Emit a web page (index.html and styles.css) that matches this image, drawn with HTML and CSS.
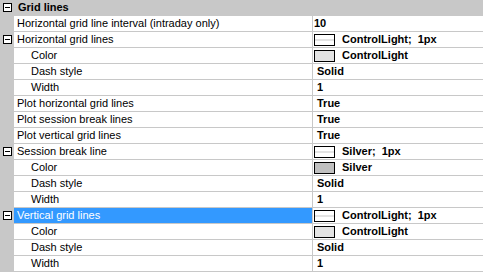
FILE: index.html
```html
<!DOCTYPE html>
<html lang="en">
<head>
    <meta charset="UTF-8">
    <meta name="viewport" content="width=device-width, initial-scale=1.0">
    <title>Grid lines</title>
    <link rel="stylesheet" href="styles.css">
</head>
<body>
    <div class="grid">
        <div class="category">
            <div class="gutter"><span class="toggle"></span></div>
            <div class="category-name">Grid lines</div>
        </div>

        <div class="row">
            <div class="gutter"></div>
            <div class="name">Horizontal grid line interval (intraday only)</div>
            <div class="value">10</div>
        </div>
        <div class="row">
            <div class="gutter"><span class="toggle"></span></div>
            <div class="name">Horizontal grid lines</div>
            <div class="value"><span class="swatch line-swatch"></span>ControlLight;&nbsp; 1px</div>
        </div>
        <div class="row">
            <div class="gutter"></div>
            <div class="name sub">Color</div>
            <div class="value"><span class="swatch control-light"></span>ControlLight</div>
        </div>
        <div class="row">
            <div class="gutter"></div>
            <div class="name sub">Dash style</div>
            <div class="value text">Solid</div>
        </div>
        <div class="row">
            <div class="gutter"></div>
            <div class="name sub">Width</div>
            <div class="value text">1</div>
        </div>
        <div class="row">
            <div class="gutter"></div>
            <div class="name">Plot horizontal grid lines</div>
            <div class="value text">True</div>
        </div>
        <div class="row">
            <div class="gutter"></div>
            <div class="name">Plot session break lines</div>
            <div class="value text">True</div>
        </div>
        <div class="row">
            <div class="gutter"></div>
            <div class="name">Plot vertical grid lines</div>
            <div class="value text">True</div>
        </div>
        <div class="row">
            <div class="gutter"><span class="toggle"></span></div>
            <div class="name">Session break line</div>
            <div class="value"><span class="swatch line-swatch"></span>Silver;&nbsp; 1px</div>
        </div>
        <div class="row">
            <div class="gutter"></div>
            <div class="name sub">Color</div>
            <div class="value"><span class="swatch silver"></span>Silver</div>
        </div>
        <div class="row">
            <div class="gutter"></div>
            <div class="name sub">Dash style</div>
            <div class="value text">Solid</div>
        </div>
        <div class="row">
            <div class="gutter"></div>
            <div class="name sub">Width</div>
            <div class="value text">1</div>
        </div>
        <div class="row selected">
            <div class="gutter"><span class="toggle"></span></div>
            <div class="name">Vertical grid lines</div>
            <div class="value"><span class="swatch line-swatch"></span>ControlLight;&nbsp; 1px</div>
        </div>
        <div class="row">
            <div class="gutter"></div>
            <div class="name sub">Color</div>
            <div class="value"><span class="swatch control-light"></span>ControlLight</div>
        </div>
        <div class="row">
            <div class="gutter"></div>
            <div class="name sub">Dash style</div>
            <div class="value text">Solid</div>
        </div>
        <div class="row">
            <div class="gutter"></div>
            <div class="name sub">Width</div>
            <div class="value text">1</div>
        </div>
    </div>
</body>
</html>
```

FILE: styles.css
```css
body {
    margin: 0;
    padding: 0;
    background-color: white;
    font-family: "Liberation Sans", Arial, sans-serif;
    font-size: 11px;
    color: black;
}

.grid {
    width: 483px;
}

.category, .row {
    display: flex;
    height: 15px;
    border-bottom: 1px solid #c8c8c8;
    line-height: 15px;
}

.category {
    background-color: #c8c8c8;
}

.gutter {
    width: 14px;
    flex-shrink: 0;
    background-color: #c8c8c8;
    position: relative;
}

/* the little [-] expander box */
.toggle {
    position: absolute;
    left: 3px;
    top: 3px;
    width: 7px;
    height: 7px;
    border: 1px solid black;
    background-color: white;
}

.toggle::after {
    content: "";
    position: absolute;
    left: 1px;
    top: 3px;
    width: 5px;
    height: 1px;
    background-color: black;
}

.category-name {
    padding-left: 4px;
    font-weight: bold;
}

.name {
    width: 295px;
    flex-shrink: 0;
    padding-left: 3px;
    border-right: 1px solid #c8c8c8;
    white-space: nowrap;
}

.name.sub {
    width: 281px;
    padding-left: 17px;
}

.selected .name {
    background-color: #3399ff;
    color: white;
}

.value {
    flex: 1;
    padding-left: 1px;
    font-weight: bold;
    display: flex;
    align-items: center;
    white-space: nowrap;
}

.value.text {
    padding-left: 4px;
}

.swatch {
    width: 19px;
    height: 10px;
    border: 1px solid black;
    margin-right: 7px;
    flex-shrink: 0;
    box-sizing: content-box;
}

.line-swatch {
    background: linear-gradient(to bottom, white 4px, #e3e3e3 4px, #e3e3e3 6px, white 6px);
}

.control-light {
    background-color: #e3e3e3;
}

.silver {
    background-color: #c0c0c0;
}
```
